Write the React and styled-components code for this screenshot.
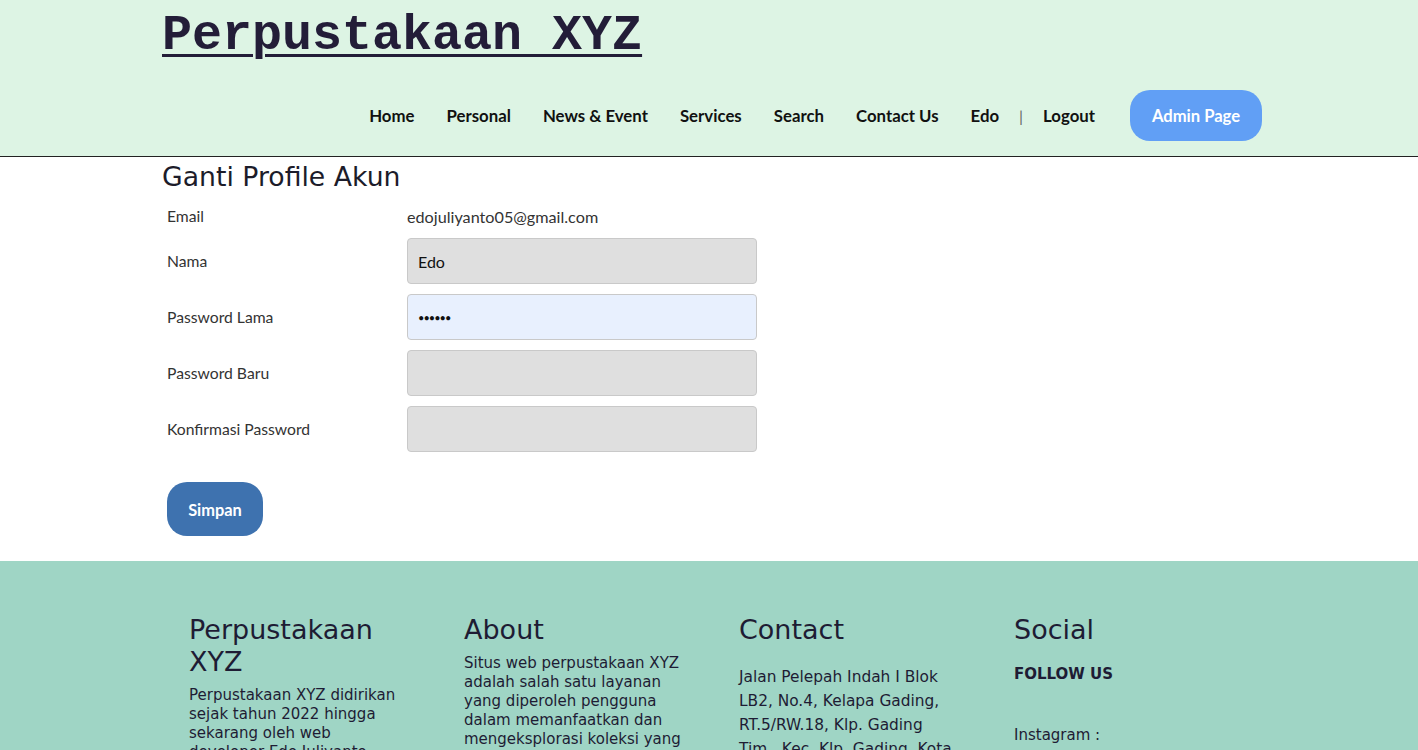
import styled, { createGlobalStyle } from "styled-components";

const GlobalStyle = createGlobalStyle`
    body {
        margin: 0;
        font-family: "Lato", "Noto Sans", sans-serif;
        background: #ffffff;
    }
    * {
        box-sizing: border-box;
    }
`;

const comic = `"Comic Sans MS", "DejaVu Sans", sans-serif`;

const Container = styled.div`
    width: 1100px;
    margin-left: calc((100% - 1094px) / 2);
`;

const Header = styled.header`
    background: #ddf4e4;
    border-bottom: 1px solid #222;
    height: 157px;
`;

const Brand = styled.h1`
    margin: 0;
    padding-top: 8px;
    font-family: "Liberation Mono", "Courier New", monospace;
    font-weight: 700;
    font-size: 50px;
    line-height: 56px;
    color: #231d38;
    text-decoration: underline;
    text-decoration-thickness: 3px;
    text-underline-offset: 5px;
`;

const Nav = styled.nav`
    display: flex;
    justify-content: flex-end;
    align-items: center;
    margin-top: 26px;
`;

const NavLink = styled.a`
    font-weight: 700;
    font-size: 16.8px;
    color: #111;
    text-decoration: none;
    padding: 0 16px;
`;

const Divider = styled.span`
    color: #666;
    font-size: 16px;
    padding: 0 4px;
`;

const AdminButton = styled.a`
    margin-left: 19px;
    display: flex;
    align-items: center;
    justify-content: center;
    width: 132px;
    height: 51px;
    border-radius: 20px;
    background: #619ff5;
    color: #fff;
    font-weight: 700;
    font-size: 16.6px;
    text-decoration: none;
`;

const Main = styled.main`
    padding-bottom: 25px;
`;

const PageTitle = styled.h2`
    margin: 0;
    padding-top: 3px;
    font-family: ${comic};
    font-weight: 400;
    font-size: 26.7px;
    line-height: 34px;
    color: #1c1c2a;
`;

const Form = styled.form`
    padding-left: 5px;
    margin-top: 10px;
`;

const Row = styled.div`
    display: grid;
    grid-template-columns: 240px 350px;
    align-items: center;
    min-height: ${(p) => (p.$plain ? "24px" : "46px")};
    margin-bottom: 10px;
`;

const Label = styled.label`
    font-size: 15.7px;
    color: #333;
`;

const Value = styled.span`
    font-size: 16.2px;
    color: #333;
`;

const Input = styled.input`
    height: 46px;
    width: 350px;
    border: 1px solid #c9c9c9;
    border-radius: 4px;
    background: ${(p) => (p.$filled ? "#e8f0fe" : "#dfdfdf")};
    padding: 0 10px;
    font-family: inherit;
    font-size: ${(p) => (p.type === "password" ? "11px" : "16px")};
    letter-spacing: ${(p) => (p.type === "password" ? "-1px" : "0")};
    color: #111;
`;

const SaveButton = styled.button`
    margin-top: 20px;
    width: 96px;
    height: 54px;
    border: none;
    border-radius: 20px;
    background: #3e72af;
    color: #fff;
    font-family: inherit;
    font-weight: 700;
    font-size: 16.4px;
`;

const Footer = styled.footer`
    background: #9fd5c5;
    padding-top: 53px;
    height: 260px;
    color: #1e1c34;
    font-family: ${comic};
`;

const FooterGrid = styled.div`
    display: grid;
    grid-template-columns: repeat(4, 275px);
    padding-left: 27px;
`;

const FooterCol = styled.div`
    width: ${(p) => p.$width || "220px"};
`;

const FooterTitle = styled.h3`
    margin: 0 0 8px;
    font-weight: 400;
    font-size: 27px;
    line-height: 32px;
`;

const FooterText = styled.p`
    margin: ${(p) => (p.$spaced ? "19px 0 0" : "0")};
    font-size: ${(p) => (p.$spaced ? "15.4px" : "15px")};
    line-height: ${(p) => (p.$spaced ? "24px" : "19px")};
`;

const FollowUs = styled.p`
    margin: 16px 0 0;
    font-weight: 700;
    font-size: 15px;
    line-height: 24px;
`;

const SocialLine = styled.p`
    margin: 37px 0 0;
    font-size: 15px;
    line-height: 24px;
`;

const links = ["Home", "Personal", "News & Event", "Services", "Search", "Contact Us", "Edo"];

export default function App() {
    return (
        <>
            <GlobalStyle />
            <Header>
                <Container>
                    <Brand>Perpustakaan XYZ</Brand>
                    <Nav>
                        {links.map((l) => (
                            <NavLink key={l} href="#">
                                {l}
                            </NavLink>
                        ))}
                        <Divider>|</Divider>
                        <NavLink href="#">Logout</NavLink>
                        <AdminButton href="#">Admin Page</AdminButton>
                    </Nav>
                </Container>
            </Header>
            <Main>
                <Container>
                    <PageTitle>Ganti Profile Akun</PageTitle>
                    <Form onSubmit={(e) => e.preventDefault()}>
                        <Row $plain>
                            <Label>Email</Label>
                            <Value>edojuliyanto05@gmail.com</Value>
                        </Row>
                        <Row>
                            <Label>Nama</Label>
                            <Input defaultValue="Edo" />
                        </Row>
                        <Row>
                            <Label>Password Lama</Label>
                            <Input type="password" defaultValue="123456" $filled />
                        </Row>
                        <Row>
                            <Label>Password Baru</Label>
                            <Input type="password" />
                        </Row>
                        <Row>
                            <Label>Konfirmasi Password</Label>
                            <Input type="password" />
                        </Row>
                        <SaveButton type="submit">Simpan</SaveButton>
                    </Form>
                </Container>
            </Main>
            <Footer>
                <Container>
                    <FooterGrid>
                        <FooterCol $width="216px">
                            <FooterTitle>Perpustakaan XYZ</FooterTitle>
                            <FooterText>
                                Perpustakaan XYZ didirikan sejak tahun 2022 hingga sekarang oleh web developer Edo Juliyanto
                            </FooterText>
                        </FooterCol>
                        <FooterCol>
                            <FooterTitle>About</FooterTitle>
                            <FooterText>
                                Situs web perpustakaan XYZ adalah salah satu layanan yang diperoleh pengguna dalam
                                memanfaatkan dan mengeksplorasi koleksi yang tersedia
                            </FooterText>
                        </FooterCol>
                        <FooterCol>
                            <FooterTitle>Contact</FooterTitle>
                            <FooterText $spaced>
                                Jalan Pelepah Indah I Blok LB2, No.4, Kelapa Gading, RT.5/RW.18, Klp. Gading Tim., Kec. Klp. Gading, Kota Jakarta Utara
                            </FooterText>
                        </FooterCol>
                        <FooterCol>
                            <FooterTitle>Social</FooterTitle>
                            <FollowUs>FOLLOW US</FollowUs>
                            <SocialLine>Instagram :</SocialLine>
                        </FooterCol>
                    </FooterGrid>
                </Container>
            </Footer>
        </>
    );
}
